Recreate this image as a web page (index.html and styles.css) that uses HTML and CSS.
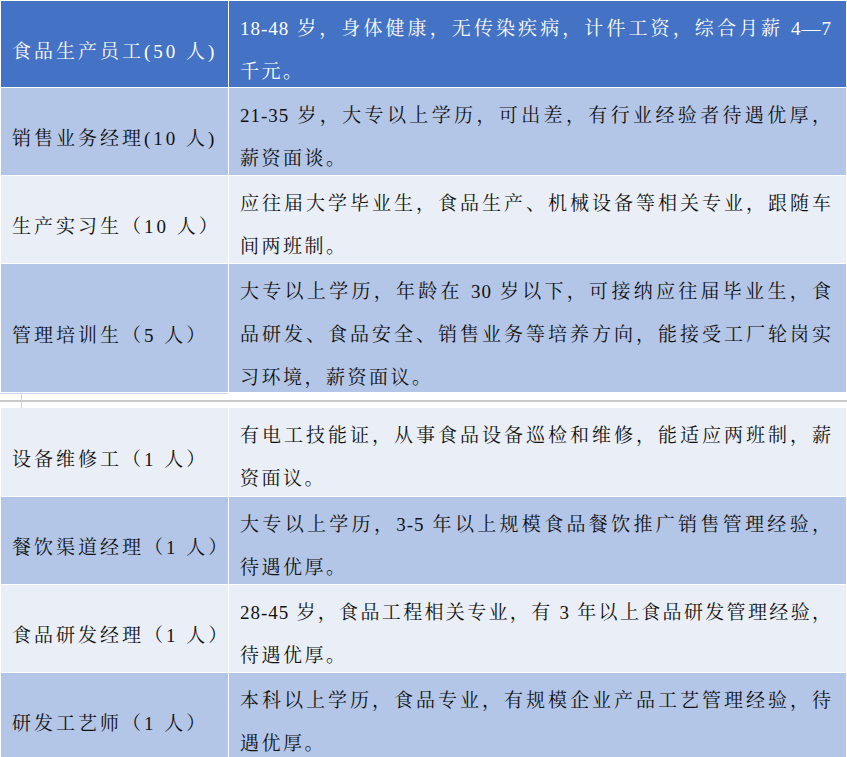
FILE: index.html
```html
<!DOCTYPE html>
<html lang="zh-CN">
<head>
<meta charset="utf-8">
<title>招聘岗位</title>
<link rel="stylesheet" href="styles.css">
</head>
<body>
<div class="table t1">
  <div class="cell name head">食品生产员工(50 人)</div>
  <div class="cell desc head"><span class="l">18-48 岁，身体健康，无传染疾病，计件工资，综合月薪 4—7</span>千元。</div>

  <div class="cell name dark">销售业务经理(10 人)</div>
  <div class="cell desc dark"><span class="l">21-35 岁，大专以上学历，可出差，有行业经验者待遇优厚，</span>薪资面谈。</div>

  <div class="cell name light">生产实习生（10 人）</div>
  <div class="cell desc light"><span class="l">应往届大学毕业生，食品生产、机械设备等相关专业，跟随车</span>间两班制。</div>

  <div class="cell name dark">管理培训生（5 人）</div>
  <div class="cell desc dark"><span class="l">大专以上学历，年龄在 30 岁以下，可接纳应往届毕业生，食</span><span class="l">品研发、食品安全、销售业务等培养方向，能接受工厂轮岗实</span>习环境，薪资面议。</div>
</div>
<div class="sep"></div>
<div class="table t2">
  <div class="cell name light">设备维修工（1 人）</div>
  <div class="cell desc light"><span class="l">有电工技能证，从事食品设备巡检和维修，能适应两班制，薪</span>资面议。</div>

  <div class="cell name dark">餐饮渠道经理（1 人）</div>
  <div class="cell desc dark"><span class="l">大专以上学历，3-5 年以上规模食品餐饮推广销售管理经验，</span>待遇优厚。</div>

  <div class="cell name light">食品研发经理（1 人）</div>
  <div class="cell desc light"><span class="l">28-45 岁，食品工程相关专业，有 3 年以上食品研发管理经验，</span>待遇优厚。</div>

  <div class="cell name dark">研发工艺师（1 人）</div>
  <div class="cell desc dark"><span class="l">本科以上学历，食品专业，有规模企业产品工艺管理经验，待</span>遇优厚。</div>
</div>
</body>
</html>
```
FILE: styles.css
```css
html, body {
  margin: 0;
  padding: 0;
  background: #ffffff;
  overflow: hidden;
}

body {
  width: 847px;
  height: 757px;
  font-family: "Liberation Serif", "Noto Serif CJK SC", "Noto Sans CJK SC", serif;
  font-size: 19px;
  color: #111111;
}

.table {
  display: grid;
  grid-template-columns: 227px 1fr;
  column-gap: 1px;
  row-gap: 1px;
  padding: 0 1px 0 1px;
  background: #ffffff;
}

.t1 {
  padding-top: 1px;
  grid-template-rows: 86px 87px 87px 128px;
}

.t2 {
  grid-template-rows: 88px 87px 87px 87px;
}

.cell {
  box-sizing: border-box;
  overflow: visible;
  min-width: 0;
}

.name {
  display: flex;
  align-items: center;
  padding: 10px 0 0 11px;
  white-space: nowrap;
  letter-spacing: 3px;
}

.desc {
  padding: 6px 14px 0 11px;
  line-height: 43px;
  letter-spacing: 2.5px;
}

.desc .l {
  display: block;
  letter-spacing: 1px;
  text-align: justify;
  text-align-last: justify;
  text-justify: inter-character;
}

.head {
  background: #4472c4;
  color: #ffffff;
}

.dark {
  background: #b4c6e7;
}

.light {
  background: #eaeff7;
}

.sep {
  height: 16px;
  background:
    linear-gradient(#c9d5ee, #c9d5ee) 0 1px / 228px 1px no-repeat,
    linear-gradient(#c8c8c8, #c8c8c8) 0 8px / 100% 2px no-repeat,
    linear-gradient(#d4d4d4, #d4d4d4) 21px 1px / 1px 15px no-repeat,
    #ffffff;
}
```
